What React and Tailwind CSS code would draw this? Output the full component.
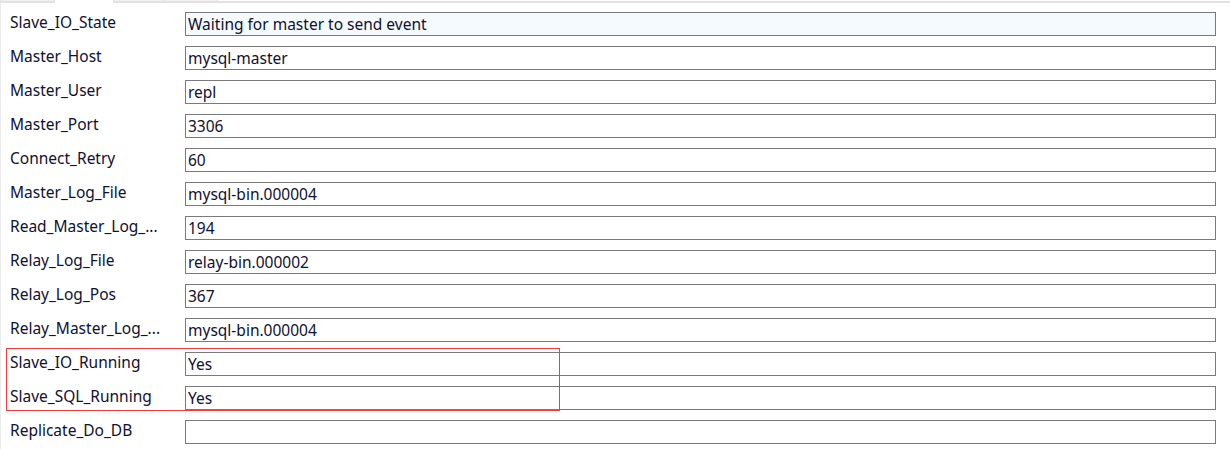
import React from 'react';

const rows = [
  ['Slave_IO_State', 'Waiting for master to send event'],
  ['Master_Host', 'mysql-master'],
  ['Master_User', 'repl'],
  ['Master_Port', '3306'],
  ['Connect_Retry', '60'],
  ['Master_Log_File', 'mysql-bin.000004'],
  ['Read_Master_Log_...', '194'],
  ['Relay_Log_File', 'relay-bin.000002'],
  ['Relay_Log_Pos', '367'],
  ['Relay_Master_Log_...', 'mysql-bin.000004'],
  ['Slave_IO_Running', 'Yes'],
  ['Slave_SQL_Running', 'Yes'],
  ['Replicate_Do_DB', ''],
];

const App = () => {
  return (
    <div
      className="relative w-[1230px] h-[449px] overflow-hidden bg-white text-[15.5px] text-[#101030]"
      style={{ fontFamily: '"Noto Sans", "Liberation Sans", sans-serif' }}
    >
      {/* tab strip */}
      <div className="flex h-[3px]">
        <div className="w-[55px] border-b-2 border-x border-[#e2e2e2] bg-[#f0f0f0]" />
        <div className="w-[58px]" />
        <div className="w-[52px] border-b-2 border-x border-[#e2e2e2] bg-[#f0f0f0]" />
        <div className="w-[53px] border-b-2 border-r border-[#e2e2e2] bg-[#f0f0f0]" />
        <div className="flex-1 border-b-2 border-[#e2e2e2]" />
      </div>

      <div className="flex flex-col gap-[10px] pt-[9px] border-l border-[#ececec] h-full">
        {rows.map(([label, value], i) => (
          <div key={label} className="flex items-center h-[24px]">
            <div className="w-[184px] pl-[9px] leading-none -mt-[3px] whitespace-nowrap">{label}</div>
            <div
              className={`w-[1031px] h-[24px] border border-[#7a7a7a] flex items-center pl-[2px] pt-[2px] leading-none ${
                i === 0 ? 'bg-[#f5faff]' : 'bg-white'
              }`}
            >
              {value}
            </div>
          </div>
        ))}
      </div>

      {/* highlight box */}
      <div className="absolute left-[6px] top-[348px] w-[554px] h-[63px] border border-[#f03c3c]" />
    </div>
  );
};

export default App;
